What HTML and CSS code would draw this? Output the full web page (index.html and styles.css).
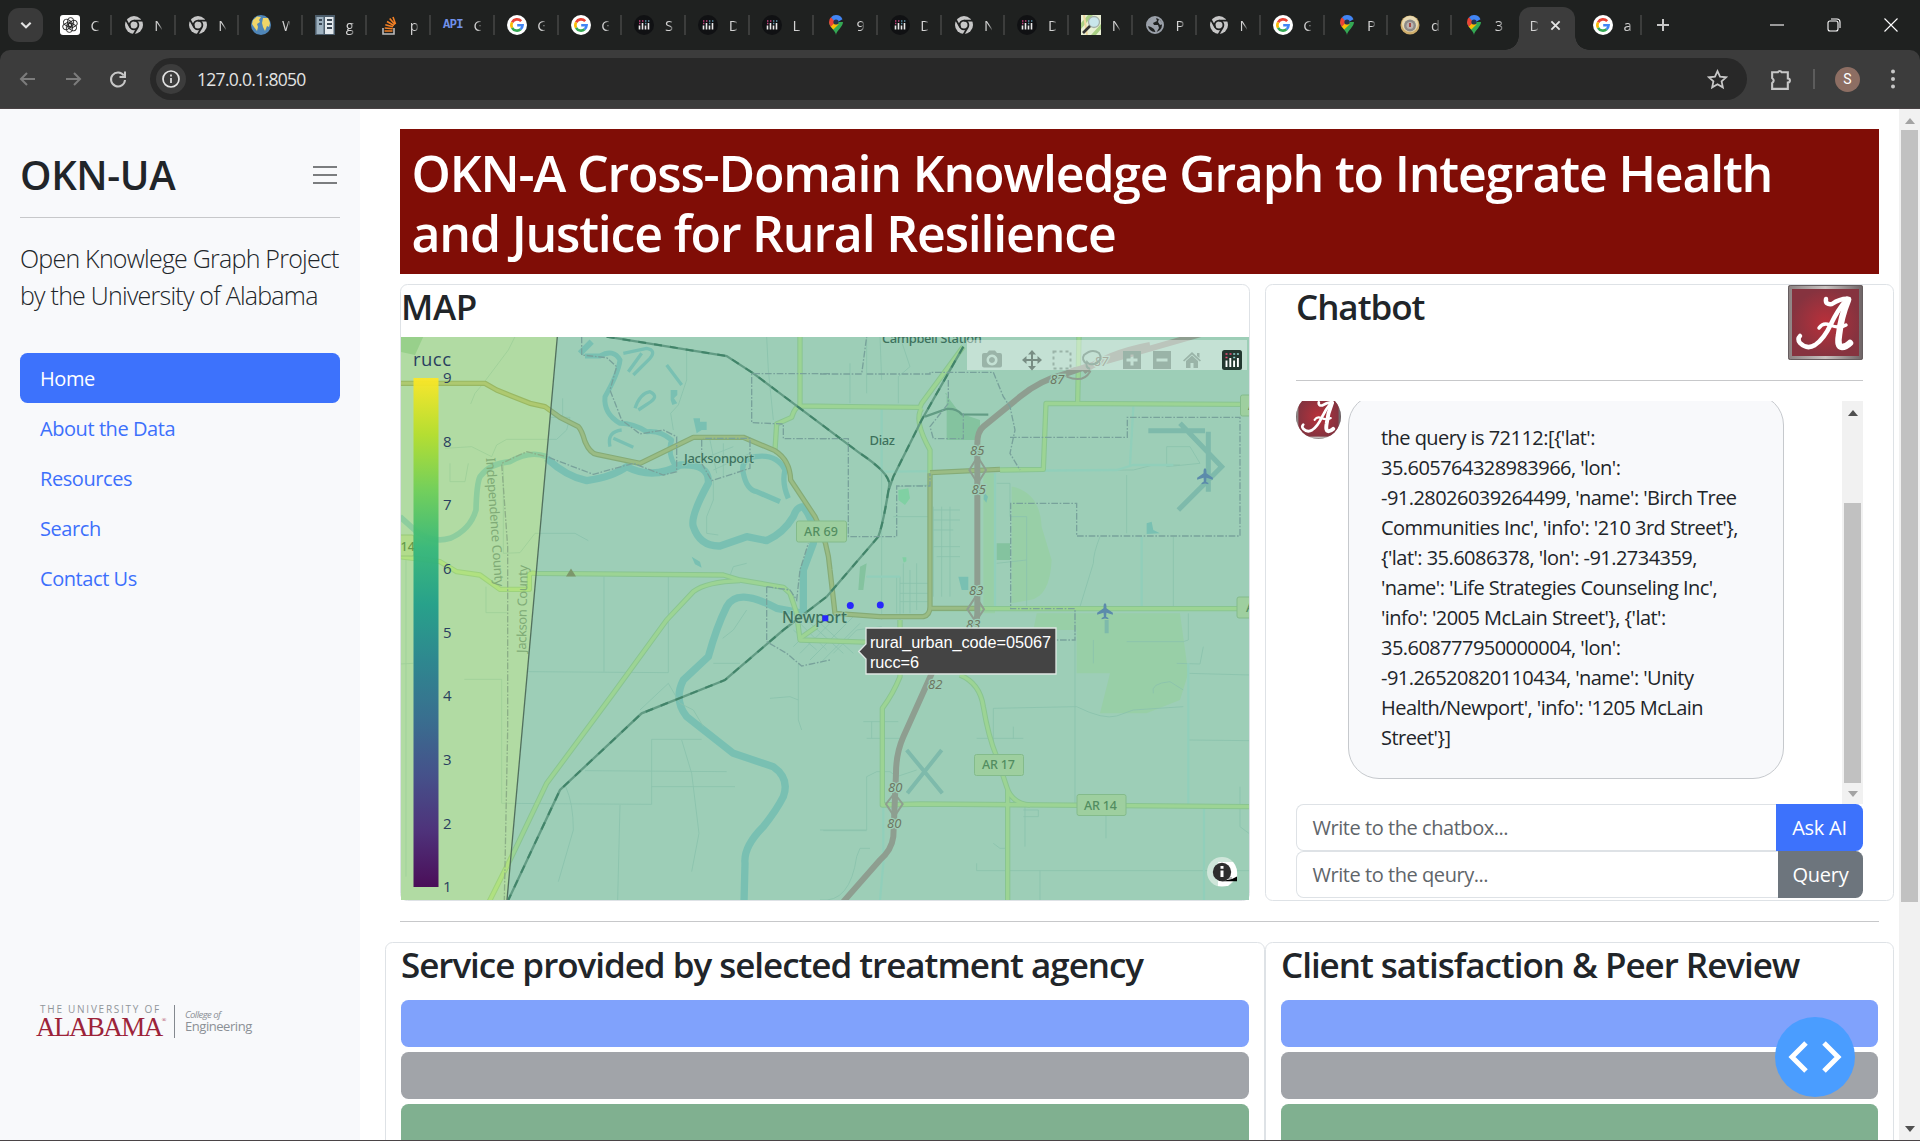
FILE: index.html
```html
<!DOCTYPE html>
<html lang="en">
<head>
<meta charset="utf-8">
<title>Dash</title>
<link rel="stylesheet" href="styles.css">
</head>
<body>
<svg class="sprite" aria-hidden="true">
  <defs>
    <radialGradient id="crimson"><stop offset="0" stop-color="#b9303a"/><stop offset="1" stop-color="#86333f"/></radialGradient>
    <linearGradient id="steel" x1="0" x2="1"><stop offset="0" stop-color="#8b8181"/><stop offset=".5" stop-color="#c9c2c0"/><stop offset="1" stop-color="#6d6264"/></linearGradient>
    <symbol id="i-openai" viewBox="0 0 20 20"><rect width="20" height="20" rx="3" fill="#fff"/><g fill="none" stroke="#222" stroke-width=".9"><rect x="7.600" y="2.600" width="6" height="9" rx="3" transform="rotate(0 10 10)"/><rect x="7.600" y="2.600" width="6" height="9" rx="3" transform="rotate(60 10 10)"/><rect x="7.600" y="2.600" width="6" height="9" rx="3" transform="rotate(120 10 10)"/><rect x="7.600" y="2.600" width="6" height="9" rx="3" transform="rotate(180 10 10)"/><rect x="7.600" y="2.600" width="6" height="9" rx="3" transform="rotate(240 10 10)"/><rect x="7.600" y="2.600" width="6" height="9" rx="3" transform="rotate(300 10 10)"/></g></symbol>
    <symbol id="i-chrome" viewBox="0 0 20 20"><circle cx="10" cy="10" r="9" fill="#c7c7c7"/><circle cx="10" cy="10" r="4.4" fill="#c7c7c7" stroke="#1f2020" stroke-width="1.8"/><path d="M10 5.6H18.4M6.2 12.2L2 4.9M13.8 12.2L9.6 19.4" stroke="#1f2020" stroke-width="1.8"/></symbol>
    <symbol id="i-earth" viewBox="0 0 20 20"><circle cx="10" cy="10" r="10" fill="#4f86b8"/><path d="M2 5L6 1.5L10 2L8 5L9 7L6 9L7 12L6 16L3 12L1 9ZM12 3L17 3L19 8L18 12L16 11L14 16L12 12L11 8Z" fill="#f0d668"/></symbol>
    <symbol id="i-panel" viewBox="0 0 20 20"><path d="M0 0h20v20H0z" fill="#4c5d6b"/><path d="M1.500 2h7v17h-7z" fill="#9db1bf"/><path d="M10 2h8.500v17H10z" fill="#e4eaee"/><path d="M4 4h3v2H4zM4 8h3v2H4zM12 4h5v2h-5zM12 8h5v2h-5zM12 12h5v2h-5z" fill="#3a4753"/></symbol>
    <symbol id="i-stack" viewBox="0 0 20 20"><path d="M4 13v6h11v-6" fill="none" stroke="#bcbbbb" stroke-width="1.600"/><path d="M5.500 16h8M5.700 13l8 .8M6.300 9.800l7.700 2M8 6.500l7 4M10.700 3.500l5.300 6M14 2l2.500 7" stroke="#f48024" stroke-width="1.600"/></symbol>
    <symbol id="i-google" viewBox="0 0 20 20"><circle cx="10" cy="10" r="10" fill="#fff"/><g fill="none" stroke-width="2.600"><path d="M14.200 6.200A5.600 5.600 0 0 0 5.100 7.300" stroke="#ea4335"/><path d="M5.100 7.300A5.600 5.600 0 0 0 5.100 12.800" stroke="#fbbc05"/><path d="M5.100 12.800A5.600 5.600 0 0 0 13.600 14.300" stroke="#34a853"/><path d="M13.600 14.300A5.600 5.600 0 0 0 15.600 10.300H10.200" stroke="#4285f4"/></g></symbol>
    <symbol id="i-plotly" viewBox="0 0 20 20"><circle cx="10" cy="10" r="10" fill="#101113"/><path d="M5.500 10.500v4M8.500 8v6.500M11.500 10.500v4M14.500 8v6.500" stroke="#e8e8e8" stroke-width="1.600"/><path d="M5 6h1.400M5 8.500h1.400M8 6h1.400" stroke="#c2417f" stroke-width="1.400"/><path d="M11 6h1.400M11 8.500h1.400M14 6h1.400" stroke="#5d95ad" stroke-width="1.400"/></symbol>
    <symbol id="i-pin" viewBox="0 0 20 20"><path d="M10 20C9.500 15.500 3 12 3 7H17C17 12 10.500 15.500 10 20Z" fill="#34a853"/><path d="M4.600 11.500L10 5l2.500 4.500L7.300 14.600Z" fill="#fbbc04"/><path d="M3 7Q3 4 5 2.300L10 6.500L4.700 11.700Q3 9.500 3 7" fill="#ea4335"/><path d="M5 2.300Q7 0 10 0Q14.800 0 16.500 4.300L10 8Z" fill="#4285f4"/><circle cx="10" cy="7" r="2.600" fill="#26344d"/></symbol>
    <symbol id="i-osm" viewBox="0 0 20 20"><path d="M0 0h20v20H0z" fill="#e9f0d4"/><path d="M0 8L7 0h5L0 14zM10 20L20 9v5l-5 6z" fill="#a9cf84"/><path d="M3 0l3 20" stroke="#efd9a0" stroke-width="2"/><circle cx="13" cy="7" r="5.500" fill="#c9e6ec" stroke="#a5b0a8" stroke-width="1.300"/><path d="M9 11l-7 7" stroke="#333" stroke-width="2.600"/></symbol>
    <symbol id="i-globe" viewBox="0 0 20 20"><circle cx="10" cy="10" r="8" fill="none" stroke="#9aa0a9" stroke-width="2"/><path d="M3 6L7 3H11L12 6L8 8L9 10H13L14 13L11 18L9 14L6 12L3 11ZM14 4l4 5-3 1-2-3z" fill="#9aa0a9"/></symbol>
    <symbol id="i-coin" viewBox="0 0 20 20"><circle cx="10" cy="10" r="9.500" fill="#cfae6c"/><circle cx="10" cy="9" r="8" fill="#e8dab4"/><circle cx="10" cy="10.500" r="6" fill="#8c8a88"/><circle cx="10" cy="10.500" r="3.500" fill="#bcb4b0"/><path d="M10 8v4" stroke="#a3332d" stroke-width="1.600"/></symbol>
    <symbol id="i-crest" viewBox="0 0 75 75"><rect width="75" height="75" rx="2" fill="url(#steel)"/><rect x=".5" y=".5" width="74" height="74" rx="2" fill="none" stroke="#665d5f"/><rect x="4" y="4" width="67" height="67" fill="url(#crimson)"/><g fill="none" stroke="#fff" stroke-linecap="round" stroke-linejoin="round"><path d="M38 14Q37 20 44 19Q53 13 61 14" stroke-width="4.500"/><path d="M59 14Q49 26 43 39Q36 54 27 60Q19 65 12 58Q9 54 12 51" stroke-width="4.500"/><path d="M60 15Q53 32 51 50Q49 62 54 62Q58 62 62 58" stroke-width="6.500"/><path d="M31 43Q35 37 42 40Q51 44 58 40" stroke-width="3.500"/></g></symbol>
    <symbol id="i-plane" viewBox="-8 -8 16 16"><path d="M0-7C1.300-7 1.300-5 1.300-2.500L7 1.500V3.300L1.300 1.600L1 5L3 6.300V7.300L0 6.600L-3 7.300V6.300L-1 5L-1.300 1.600L-7 3.300V1.500L-1.300-2.500C-1.300-5-1.300-7 0-7Z"/></symbol>
  </defs>
</svg>

<header class="tabs">
  <button class="tab-search"><svg viewBox="0 0 12 12"><path d="M2 4l4 4 4-4"/></svg></button>
  <div class="tab"><svg><use href="#i-openai"/></svg><span>C</span></div>
  <div class="tab"><svg><use href="#i-chrome"/></svg><span>N</span></div>
  <div class="tab"><svg><use href="#i-chrome"/></svg><span>N</span></div>
  <div class="tab"><svg><use href="#i-earth"/></svg><span>W</span></div>
  <div class="tab"><svg><use href="#i-panel"/></svg><span>g</span></div>
  <div class="tab"><svg><use href="#i-stack"/></svg><span>p</span></div>
  <div class="tab"><b class="api">API</b><span>G</span></div>
  <div class="tab"><svg><use href="#i-google"/></svg><span>G</span></div>
  <div class="tab"><svg><use href="#i-google"/></svg><span>G</span></div>
  <div class="tab"><svg><use href="#i-plotly"/></svg><span>S</span></div>
  <div class="tab"><svg><use href="#i-plotly"/></svg><span>D</span></div>
  <div class="tab"><svg><use href="#i-plotly"/></svg><span>L</span></div>
  <div class="tab"><svg><use href="#i-pin"/></svg><span>9</span></div>
  <div class="tab"><svg><use href="#i-plotly"/></svg><span>D</span></div>
  <div class="tab"><svg><use href="#i-chrome"/></svg><span>N</span></div>
  <div class="tab"><svg><use href="#i-plotly"/></svg><span>D</span></div>
  <div class="tab"><svg><use href="#i-osm"/></svg><span>N</span></div>
  <div class="tab"><svg><use href="#i-globe"/></svg><span>P</span></div>
  <div class="tab"><svg><use href="#i-chrome"/></svg><span>N</span></div>
  <div class="tab"><svg><use href="#i-google"/></svg><span>G</span></div>
  <div class="tab"><svg><use href="#i-pin"/></svg><span>P</span></div>
  <div class="tab"><svg><use href="#i-coin"/></svg><span>d</span></div>
  <div class="tab last"><svg><use href="#i-pin"/></svg><span>3</span></div>
  <div class="tab-active"><span>D</span><svg viewBox="0 0 12 12"><path d="M1.500 1.500l9 9M10.500 1.500l-9 9"/></svg></div>
  <div class="tab after"><svg><use href="#i-google"/></svg><span>a</span></div>
  <svg class="new-tab" viewBox="0 0 14 14"><path d="M7 1v12M1 7h12"/></svg>
  <div class="window-controls">
    <svg viewBox="0 0 14 14"><path d="M0 7h14"/></svg>
    <svg viewBox="0 0 14 14"><rect x="1" y="3" width="10" height="10" rx="2"/><path d="M4 1h6q3 0 3 3v6"/></svg>
    <svg viewBox="0 0 14 14"><path d="M.5.500l13 13M13.500.500l-13 13"/></svg>
  </div>
</header>

<div class="toolbar">
  <svg class="nav dim" viewBox="0 0 20 20"><path d="M17 10H3M9 4l-6 6 6 6"/></svg>
  <svg class="nav dim" viewBox="0 0 20 20"><path d="M3 10h14M11 4l6 6-6 6"/></svg>
  <svg class="nav" viewBox="0 0 20 20"><path d="M15.800 6.500A7 7 0 1 0 17 11"/><path d="M17 2.500V8h-5.500"/></svg>
  <div class="omnibox">
    <span class="site-info"><svg viewBox="0 0 20 20"><circle cx="10" cy="10" r="8"/><path d="M10 9v5M10 5.500v2"/></svg></span>
    <span class="url">127.0.0.1:8050</span>
    <svg class="star" viewBox="0 0 20 20"><path d="M10 2l2.400 5.300 5.800.6-4.300 3.900 1.200 5.700-5.100-2.900-5.100 2.900 1.200-5.700L1.800 7.900l5.800-.6z"/></svg>
  </div>
  <svg class="ext" viewBox="0 0 22 22"><path d="M3 4h5.500a2 2 0 0 1 3.600 0H18v6a2 2 0 0 1 0 4v6H3v-5.500q3-2.500 0-5z"/></svg>
  <i class="sep"></i>
  <span class="avatar">S</span>
  <svg class="more" viewBox="0 0 4 20"><circle cx="2" cy="2.500" r="2"/><circle cx="2" cy="10" r="2"/><circle cx="2" cy="17.500" r="2"/></svg>
</div>

<div class="page">
  <aside class="sidebar">
    <div class="brand"><h2>OKN-UA</h2><svg viewBox="0 0 24 18"><path d="M0 1h24M0 9h24M0 17h24"/></svg></div>
    <hr>
    <p class="lead">Open Knowlege Graph Project<br>by the University of Alabama</p>
    <nav>
      <a class="active">Home</a><a>About the Data</a><a>Resources</a><a>Search</a><a>Contact Us</a>
    </nav>
    <div class="ua-logo">
      <div class="ua-name"><small>THE UNIVERSITY OF</small><strong>ALABAMA<sup>®</sup></strong></div>
      <div class="ua-college"><em>College of</em><span>Engineering</span></div>
    </div>
  </aside>

  <main>
    <h1>OKN-A Cross-Domain Knowledge Graph to Integrate Health<br>and Justice for Rural Resilience</h1>

    <div class="row top">
      <section class="card map-card">
        <h3>MAP</h3>
        <div class="map">
        <svg viewBox="401 337 848 563">
          <defs>
            <linearGradient id="viridis" x1="0" y1="1" x2="0" y2="0"><stop offset="0" stop-color="#440154"/><stop offset=".111" stop-color="#482878"/><stop offset=".222" stop-color="#3e4989"/><stop offset=".333" stop-color="#31688e"/><stop offset=".444" stop-color="#26828e"/><stop offset=".556" stop-color="#1f9e89"/><stop offset=".667" stop-color="#35b779"/><stop offset=".778" stop-color="#6ece58"/><stop offset=".889" stop-color="#b5de2b"/><stop offset="1" stop-color="#fde725"/></linearGradient>
            <g id="secondary">
              <path d="M0 680L120 695L170 725L240 735L300 778H388V735Q390 728 405 730L970 735L1020 750L1150 772L1170 790L1190 850L1200 930L1420 937L1470 958"/>
              <path d="M1200 925L1250 890M1020 752Q920 755 880 785L800 870L640 1090L440 1360L330 1590L265 1720"/>
              <path d="M1200 20V228L1350 230L1560 232L1565 220L1690 50"/>
              <path d="M1200 228Q1185 230 1175 262L1130 282L1125 360"/>
              <path d="M1565 235Q1540 270 1590 360V430"/>
              <path d="M2037 20L2033 215M2540 223L1938 220L1930 418L1800 420"/>
              <path d="M1590 836H2540"/>
              <path d="M1500 870V1040Q1480 1090 1447 1135V1425L1560 1422L2550 1430"/>
              <path d="M1680 1035Q1740 1060 1750 1130Q1765 1220 1790 1280L1820 1370Q1835 1420 1890 1425M1823 1380V1720"/>
            </g>
            <g id="primary">
              <path d="M0 160H255L290 180L390 220L435 230L480 262L535 290Q545 300 555 335Q570 370 590 373L720 400L880 322H1030L1125 362Q1170 390 1172 450L1245 560Q1285 640 1290 720L1305 850L1440 860H1570Q1590 855 1590 830V430"/>
              <path d="M1590 428L1800 418M1590 835H1740"/>
            </g>
            <g id="motorway">
              <path d="M2410 10L2200 70L2060 110L2000 130Q1920 150 1860 200L1750 290Q1732 305 1732 340V850L1725 930Q1700 990 1600 1020L1510 1220Q1488 1270 1488 1330L1480 1520Q1475 1560 1440 1590L1330 1715"/>
              <path d="M2250 45Q2120 70 2050 125"/>
            </g>
            <g id="minor">
              <path d="M345 20L325 60L250 160L225 190L212 222M488 205V262M452 262H510L500 300L470 328H320L290 345L275 380L215 350L135 355M150 400V455H195L205 400M310 400V670L360 668L405 610H525L565 632M258 770V848H320M18 670V1640M0 1002L40 1000M193 1048H305V1420L755 1423V1228H905M385 1025L805 1028V740M612 740V1025M555 1322L980 1325M755 1370H1005M845 1230L875 1330L897 1510L875 1625M497 1370Q520 1420 520 1500L475 1655M660 1425L653 1710M805 1060L720 1140M805 1060L840 1120L880 1140L910 1190M1040 700L1000 710L985 750L970 738M860 60V150L835 225L812 250L820 300M1100 20L1105 120L1120 270M940 450V510L920 560V610L955 615M1110 1105L1170 1100L1195 1110V1170L1205 1200M1195 1110V1000M1270 1502H1400M940 1000H1020M1040 840L1000 900L968 925"/>
              <path d="M1445 230V425L2200 420L2260 405H2340M1445 425V870M2200 230L2190 405M1785 430V830M1400 740H1500V870M1370 900L1445 890M1480 560H1590M1600 530V800M1600 540H1680M1600 570H1680M1600 600H1660M1600 650H1680M1610 680H1680M1625 530V800M1650 530V800M1490 470L1590 465M1400 20V190M1500 20L1530 110L1495 140V220M1350 100V220M1790 460H1830V560H1880V830M1790 700L1880 690M2330 1000L2400 1002L2410 950M2180 935L2350 935L2365 930V850M2365 1030L2550 1035M2365 1230L2550 1232M2225 620V830M2320 620V830M2100 620Q2080 670 2080 700L2040 830M2180 435V610M2300 350L2370 350L2400 400L2300 410ZM1780 1250V1135L2030 1130Q2110 1170 2150 1158L2200 1140L2350 1130M2025 840V1420M1730 1225H1870M1840 1190V1225M1390 1175H1495M1400 1225H1500M1415 1175V1225M1260 1500H1400V1340L1430 1325H1470L1490 1340L1550 1320M1260 1710Q1350 1720 1370 1580L1380 1555H1410M1730 1600V1622H2550M1920 1622V1710M1875 1430V1550M1870 1440H1915V1460H1870M2118 1455V1525M2520 1370V1490L2560 1520M2260 1090Q2250 1060 2310 1055L2350 1080M1780 1540L1800 1555H1820M2080 930V1000M1440 20L1445 150"/>
            </g>
            <g id="streets">
              <path d="M1180 900L1250 960M1200 880L1280 960M1220 870L1330 970M1250 870L1360 970M1180 950L1280 850M1200 970L1320 850M1230 990L1360 860M1260 1000L1380 880M1300 970L1370 900M930 330L950 430M970 340V440M900 390L1000 350M940 420L1050 370M1490 740V850M1510 700V850M1530 720V850M1550 700V840M1500 760H1590M1500 790H1590M1500 815H1590"/>
            </g>
          </defs>
          <rect class="land" x="401" y="337" width="848" height="563"/>
          <g transform="translate(400 330) scale(.33333)">
            <path class="wood" d="M0 20H70L45 75L0 65Z"/>
            <path class="park" d="M1840 470Q1920 490 1925 590L1955 690Q1950 800 1890 810L1835 820V470ZM1750 430H1785V850H1750ZM1910 850H2340L2365 1030L2340 1110L2240 1150H2100L2130 1030H2030V900H1900Z"/>
            <path class="wood" d="M1600 190h40v140h100v-60l-60-20-45-60zM1790 640h40v50h-40zM1380 710l20-10-10 80-15 0z"/>
            <path class="lawn" d="M1495 480l30-5 5 30-15 20-20-15zM1507 682l12 0 0 12-8 4z"/>
            <g class="water">
              <path d="M0 560L50 605Q100 640 150 625Q210 600 228 540Q230 460 240 440Q270 400 330 395Q390 360 440 380" stroke-width="17"/>
              <path d="M830 415Q800 370 815 330Q780 300 740 305Q700 280 660 280Q610 250 615 200Q655 130 660 90Q640 55 600 78H555" stroke-width="15"/>
              <path d="M440 385Q500 440 560 452Q640 440 680 410Q760 450 840 405Q930 400 925 460Q870 560 880 590Q900 650 960 648L1040 620L1100 632Q1150 610 1180 560Q1190 530 1210 530Q1250 580 1240 640L1210 720V850L1130 835Q1010 770 980 830Q950 890 925 980L850 1050Q820 1110 860 1160L1000 1270L1120 1310Q1170 1345 1150 1400Q1130 1440 1090 1490Q1030 1550 1035 1600L1032 1720" stroke-width="22"/>
              <path d="M1065 380Q1130 370 1155 420Q1145 460 1165 505M1065 380Q1020 390 1030 430Q1040 480 1070 485L1140 515" stroke-width="16"/>
              <path d="M670 70L740 55Q770 60 750 85L700 135M725 70L685 125M800 105L845 165M630 350Q620 305 665 300M640 325L700 352M705 235Q720 190 750 185Q780 200 745 220L715 240" stroke-width="10"/>
              <path d="M575 35L540 70" stroke-width="18"/>
            </g>
            <path class="lake" d="M880 265h20v10h20v25h-15l-15 10zM875 680l25 15 5 18-20-10zM812 180h20v15l-10 10 10 15-15 5-5-15zM1675 740h30v40h-20zM1752 485l12 15-5 18-8-10zM2240 580l15-5 5 25 20 10-40 2z"/>
            <g class="runway"><path d="M2245 302H2415M2340 280L2465 410L2335 540M2425 305V485" stroke-width="15"/><path d="M1520 1260L1627 1390M1625 1260L1522 1390M2120 870V910" stroke-width="12"/></g>
            <use href="#minor" class="minor"/><use href="#streets" class="minor"/>
            <g class="white-road"><path d="M1445 230V425L2150 420L2200 405H2320M2200 230L2190 405M1785 430V830M2365 1000V1425M2412 1430V1720M1450 1430V1600L1440 1710M2225 620V830M1400 740H1500"/></g>
            <use href="#secondary" class="secondary-case"/><use href="#secondary" class="secondary"/>
            <use href="#primary" class="primary-case"/><use href="#primary" class="primary"/>
            <g class="rail"><path d="M620 20L980 78L1060 130L1380 370Q1470 430 1468 465Q1450 580 1435 620L1280 800L1150 900L975 1050L725 1150L480 1380L325 1710M1690 50L1565 270L1480 440L1466 480M1575 260L1640 237Q1670 235 1685 253L1765 254"/></g>
            <g class="rail-dash"><path d="M620 20L980 78L1060 130L1380 370Q1470 430 1468 465Q1450 580 1435 620L1280 800L1150 900L975 1050L725 1150L480 1380L325 1710M1690 50L1565 270L1480 440L1466 480"/></g>
            <use href="#motorway" class="motorway"/>
            <g class="ramps"><path d="M1733 380L1758 420L1733 460L1708 420ZM1727 800L1752 838L1727 875L1702 838ZM1483 1390L1508 1422L1483 1460L1458 1422ZM1995 130Q2030 100 2070 125Q2050 160 2000 140"/></g>
            <g class="border">
              <path d="M545 20V75L620 83L650 110L630 180L665 270L720 312L790 300L830 320V425L790 435L700 400L580 433L440 380L380 365L305 400L323 650V1200L313 1710M905 330V400L935 452L1050 415V325H910M1290 131H1055V278L1150 282V326H1290M1100 770L1170 780L1190 810L1200 720L1225 640M1100 770V935L1160 970L1205 1008L1290 990"/>
              <path d="M1260 132H1385L1400 20M1400 132H1590V127H1780L1810 200L1830 230L1845 300L1830 370L1860 420M1645 150V220L1590 290L1600 326H1690V250M1830 322H2182V262H2520V618H2030V520H1832V836H2025V930H1960M1260 326H1345V620H1490V468H1590V430"/>
            </g>
          </g>
          <g class="plane"><use href="#i-plane" x="1196" y="467" width="18" height="18"/><use href="#i-plane" x="1096" y="602" width="18" height="18"/></g>
          <path class="peak" d="M571 568.500l5 8h-10z"/>
          <g class="shield"><rect x="796.500" y="521" width="50" height="21" rx="2"/><rect x="974.500" y="754.500" width="49" height="21" rx="2"/><rect x="1077" y="794.500" width="49" height="21" rx="2"/><rect x="1240.500" y="395" width="40" height="21" rx="2"/><rect x="1237" y="597" width="40" height="21" rx="2"/><rect x="380" y="535" width="34" height="21" rx="2"/></g>
          <g class="shield-text"><text x="804" y="536" textLength="34">AR 69</text><text x="982" y="769" textLength="33">AR 17</text><text x="1084" y="810" textLength="33">AR 14</text><text x="1248" y="410">A</text><text x="1246" y="612">A</text><text x="400.500" y="551">14</text></g>
          <g class="place"><text x="684" y="463" textLength="70" font-size="13">Jacksonport</text><text x="869.500" y="445" textLength="25.500" font-size="13">Diaz</text><text x="782" y="622.500" textLength="65" font-size="15.500">Newport</text><text x="882" y="342.500" textLength="100" font-size="13">Campbell Station</text></g>
          <g class="exit"><text x="1050" y="384">87</text><text x="1094" y="366">87</text><text x="970" y="455">85</text><text x="971.500" y="493.500">85</text><text x="969" y="594.500">83</text><text x="966" y="628.500">83</text><text x="928" y="689">82</text><text x="888" y="792">80</text><text x="887" y="828">80</text></g>
          <g class="county"><text transform="translate(486 458) rotate(86)" textLength="129">Independence County</text><text transform="translate(526 653) rotate(-89)" textLength="88">Jackson County</text></g>
          <path d="M401 337H557.300L507 900H401Z" fill="#70c75d" opacity=".5"/>
          <path d="M557.300 337H1249V900H507Z" fill="#48ad85" opacity=".5"/>
          <path d="M557.300 337L507 900" stroke="#51705d" stroke-width="1.300"/>
          <g fill="#2727fb"><rect x="822.300" y="615.300" width="6" height="6" rx="1"/><circle cx="850.300" cy="605.600" r="3.500"/><circle cx="880.300" cy="605" r="3.500"/></g>
          <rect x="413.500" y="378" width="25" height="509" fill="url(#viridis)" opacity=".94"/>
          <g class="scale"><text x="413" y="366" font-size="18.500" textLength="38">rucc</text><text x="443" y="383">9</text><text x="443" y="447">8</text><text x="443" y="510">7</text><text x="443" y="574">6</text><text x="443" y="638">5</text><text x="443" y="701">4</text><text x="443" y="765">3</text><text x="443" y="829">2</text><text x="443" y="892">1</text></g>
          <rect x="967" y="340" width="280" height="30" fill="#fff" opacity=".4"/>
          <g class="modebar">
            <path d="M982 355q0-2 2-2h3l2-2.500h6l2 2.500h3q2 0 2 2v10.500q0 2-2 2h-16q-2 0-2-2zm10-.5a5.500 5.500 0 1 0 .1 0zm0 2.500a3 3 0 1 1-.1 0z" fill-rule="evenodd"/>
            <path class="on" d="M1032 350l4 4.500h-3v4.500h4.500v-3l4.500 4-4.500 4v-3h-4.500v5h3l-4 4.500-4-4.500h3v-5h-4.500v3l-4.500-4 4.500-4v3h4.500v-4.500h-3z"/>
            <path d="M1053.500 351.500h17v17h-17z" fill="none" stroke="#9ab4a8" stroke-width="2" stroke-dasharray="3 3"/>
            <path d="M1087 364Q1081 360 1084 355Q1092 348 1099 353Q1103 359 1097 363Q1090 366 1087 362Q1085 367 1090 369" fill="none" stroke="#9ab4a8" stroke-width="2"/>
            <path d="M1123 351h18v18h-18zm7.500 3.500v4h-4v3h4v4h3v-4h4v-3h-4v-4z" fill-rule="evenodd"/>
            <path d="M1153 351h18v18h-18zm3.500 7.500v3h11v-3z" fill-rule="evenodd"/>
            <path d="M1192 352l9 8.500-1.200 1-7.800-7-7.800 7-1.200-1zM1186 361l6-5.500 6 5.500v7h-4.500v-5h-3v5h-4.500zM1197 353h2.500v5l-2.500-2z"/>
          </g>
          <rect x="1222" y="350" width="20" height="20" rx="2.500" fill="#22362f"/>
          <path d="M1226.500 360.500v6.500M1230.300 358v9M1234.100 360.500v6.500M1237.900 358v9" stroke="#fff" stroke-width="1.900"/><path d="M1225.500 354h2M1225.500 357.500h2M1229.500 354h2" stroke="#ef4f7b" stroke-width="1.600"/><path d="M1233.200 354h2M1236.900 354h2M1233.200 357.500h2" stroke="#8fd2cf" stroke-width="1.600"/>
          <path d="M858.700 651.500L866 644V628H1056V674H866V659Z" fill="#444" stroke="#dfe8e3" stroke-width="1.300"/>
          <g class="tip"><text x="870" y="647.500" textLength="181">rural_urban_code=05067</text><text x="870" y="668" textLength="49">rucc=6</text></g>
          <circle cx="1222" cy="872" r="15" fill="#cfe6da"/><path d="M1218 862H1233Q1238 868 1237 877L1228 886H1218Z" fill="#fff"/><path d="M1221 881.300H1237V876.500L1232 879Z" fill="#000"/><path d="M1220 878h12" stroke="#777"/><circle cx="1222" cy="872" r="9.200" fill="#2e2e2e"/><path d="M1222 866v2.800M1222 870.500v6.500" stroke="#fff" stroke-width="3"/>
        </svg>
        </div>
      </section>

      <section class="card chat-card">
        <div class="chat-head"><h3>Chatbot</h3><svg viewBox="0 0 75 75"><use href="#i-crest"/></svg></div>
        <hr>
        <div class="chat-log">
          <div class="message">
            <svg viewBox="0 0 75 75"><use href="#i-crest"/></svg>
            <p>the query is 72112:[{'lat':<br>35.605764328983966, 'lon':<br>-91.28026039264499, 'name': 'Birch Tree<br>Communities Inc', 'info': '210 3rd Street'},<br>{'lat': 35.6086378, 'lon': -91.2734359,<br>'name': 'Life Strategies Counseling Inc',<br>'info': '2005 McLain Street'}, {'lat':<br>35.608777950000004, 'lon':<br>-91.26520820110434, 'name': 'Unity<br>Health/Newport', 'info': '1205 McLain<br>Street'}]</p>
          </div>
          <div class="scrollbar inner"><i class="up"></i><b></b><i class="down"></i></div>
        </div>
        <div class="field"><span class="input">Write to the chatbox...</span><button class="ask">Ask AI</button></div>
        <div class="field"><span class="input">Write to the qeury...</span><button class="query">Query</button></div>
      </section>
    </div>

    <hr class="divider">

    <div class="row bottom">
      <section class="card services"><h3>Service provided by selected treatment agency</h3><div class="bar blue"></div><div class="bar gray"></div><div class="bar green"></div></section>
      <section class="card reviews"><h3>Client satisfaction &amp; Peer Review</h3><div class="bar blue"></div><div class="bar gray"></div><div class="bar green"></div></section>
    </div>
  </main>

  <div class="scrollbar outer"><i class="up"></i><b></b><i class="down"></i></div>
  <button class="fab"><svg viewBox="0 0 80 80"><path d="M31 26L17 40L31 54M49 26L63 40L49 54"/></svg></button>
</div>
</body>
</html>
```
FILE: styles.css
```css
* { box-sizing: border-box; }
body { margin: 0; width: 1920px; height: 1141px; overflow: hidden; display: flex; flex-direction: column; font: 20px/30px "Open Sans", "Noto Sans", sans-serif; color: #212529; background: #fff; }
h1, h2, h3, p { margin: 0; }
button { border: 0; padding: 0; font: inherit; }
hr { margin: 0; border: 0; height: 1px; background: #c7c8ca; }
.sprite { position: absolute; width: 0; height: 0; }

/* browser chrome */
.tabs { height: 50px; flex: none; display: flex; align-items: center; background: #1f2120; padding-left: 8px; }
.tab-search { width: 35px; height: 34px; border-radius: 11px; background: #3a3a3a; display: grid; place-items: center; margin-right: 5px; }
.tab-search svg { width: 14px; height: 14px; fill: none; stroke: #e3e3e3; stroke-width: 1.8; }
.tab { flex: 0 0 63.84px; height: 20px; display: flex; align-items: center; padding-left: 12px; border-right: 2px solid #3c3d3c; }
.tab.last { border-color: transparent; }
.tab svg { width: 20px; height: 20px; flex: none; }
.tab span, .tab-active span { width: 8px; margin-left: 10.5px; overflow: hidden; font-size: 15px; line-height: 20px; color: #d2d2d2; -webkit-mask-image: linear-gradient(90deg, #000 60%, transparent 110%); mask-image: linear-gradient(90deg, #000 60%, transparent 110%); }
.api { width: 20px; font: bold 12px/20px "Liberation Mono", monospace; letter-spacing: -.5px; color: #7191ea; }
.tab-active { position: relative; flex: 0 0 56px; height: 43px; margin: 7px 3px 0; padding-bottom: 7px; background: #3c3c3c; border-radius: 12px 12px 0 0; display: flex; align-items: center; }
.tab-active::before, .tab-active::after { content: ""; position: absolute; bottom: 0; width: 14px; height: 14px; }
.tab-active::before { left: -14px; background: radial-gradient(circle at 0 0, transparent 13.500px, #3c3c3c 14px); }
.tab-active::after { right: -14px; background: radial-gradient(circle at 100% 0, transparent 13.500px, #3c3c3c 14px); }
.tab-active svg { width: 11px; height: 11px; margin-left: 12px; stroke: #e3e3e3; stroke-width: 2; }
.tab.after { padding-left: 15px; }
.new-tab { width: 14px; height: 14px; margin-left: 14px; stroke: #c7c7c7; stroke-width: 2; }
.window-controls { margin-left: auto; display: flex; gap: 43px; padding-right: 22px; }
.window-controls svg { width: 14px; height: 14px; fill: none; stroke: #fff; stroke-width: 1.1; }
.toolbar { height: 59px; flex: none; display: flex; align-items: center; background: #3c3c3c; border-top-right-radius: 10px; border-top-left-radius: 10px; border-bottom: 1px solid #494244; box-shadow: 0 -12px #1f2120; padding-left: 18px; }
.tabs { position: relative; }
.nav { width: 20px; height: 20px; margin-right: 25px; fill: none; stroke: #c7c7c7; stroke-width: 2; }
.nav.dim { stroke: #7c7c7c; }
.omnibox { width: 1597px; height: 42px; border-radius: 21px; background: #282828; display: flex; align-items: center; padding: 0 19px 0 6px; margin-left: -3px; }
.site-info { width: 30px; height: 30px; border-radius: 50%; background: #3c3c3c; display: grid; place-items: center; }
.site-info svg { width: 20px; height: 20px; fill: none; stroke: #e3e3e3; stroke-width: 1.700; }
.url { margin-left: 11px; font-size: 17.5px; letter-spacing: -.7px; color: #e3e3e3; }
.star { width: 21px; height: 21px; margin-left: auto; fill: none; stroke: #c7c7c7; stroke-width: 1.700; }
.ext { width: 23px; height: 23px; margin-left: 22px; fill: none; stroke: #c7c7c7; stroke-width: 2; }
.sep { width: 2px; height: 20px; background: #5c5c5c; margin-left: 21px; }
.avatar { width: 25px; height: 25px; border-radius: 50%; background: #8d6e63; color: #fff; font: 14px/25px Roboto, sans-serif; text-align: center; margin-left: 20px; }
.more { width: 4px; height: 20px; margin-left: 31px; fill: #c7c7c7; }

/* app */
.page { flex: 1; min-height: 0; display: flex; border-bottom: 1px solid #4a4446; position: relative; overflow: hidden; }
.sidebar { width: 360px; background: #f8f9fb; padding: 40px 20px 0; display: flex; flex-direction: column; }
.brand { display: flex; justify-content: space-between; align-items: center; padding: 0 3px 2px 0; height: 53px; }
.brand h2 { font-size: 40px; line-height: 48px; font-weight: 600; letter-spacing: -.35px; }
.brand svg { width: 24px; height: 18px; fill: none; stroke: #7b7d7f; stroke-width: 2; }
.sidebar hr { margin-top: 15px; }
.lead { margin-top: 21.5px; font-size: 25px; line-height: 37.5px; font-weight: 300; letter-spacing: -.77px; white-space: nowrap; height: 113.5px; }
nav { display: flex; flex-direction: column; }
nav a { height: 50px; line-height: 50px; padding: 1px 0 0 20px; border-radius: 7.5px; color: #3d70fb; letter-spacing: -.43px; }
nav a.active { background: #3d72fc; color: #fff; }
.ua-logo { margin: auto 0 102px 16px; display: flex; align-items: stretch; white-space: nowrap; }
.ua-name { width: 139px; border-right: 1.500px solid #84898f; height: 33px; }
.ua-name small { display: block; font: 10px/9px "Open Sans", sans-serif; letter-spacing: 1.75px; color: #90959a; padding-left: 4px; }
.ua-name strong { display: block; font: 27px/27px "Liberation Serif", serif; color: #9c2339; letter-spacing: -1.55px; }
.ua-name sup { font-size: 6px; vertical-align: 14px; line-height: 0; }
.ua-college { padding: 4px 0 0 10px; display: flex; flex-direction: column; color: #8b9096; }
.ua-college em { font-size: 9.5px; line-height: 11px; letter-spacing: -.55px; }
.ua-college span { font-size: 13px; line-height: 13px; letter-spacing: -.45px; }

main { width: 1539px; padding: 20px 5px 0 25px; }
h1 { margin: 0 15px; padding: 13.5px 11.5px 11.5px; height: 145px; background: #800d06; color: #fff; font-size: 50px; line-height: 60px; font-weight: 600; letter-spacing: -1.18px; white-space: nowrap; }
h3 { font-size: 35px; line-height: 42px; font-weight: 600; letter-spacing: -1.03px; white-space: nowrap; padding-top: 1px; height: 42px; }
.row { display: flex; }
.card { border: 1px solid #dee2e6; border-radius: 7.5px; }
.top { margin: 10px 0 0 15px; gap: 15px; height: 617px; }
.map-card { width: 850px; }
.map-card h3 { letter-spacing: -.3px; }
.map { margin-top: 10px; height: 563px; }
.map svg { display: block; width: 848px; height: 563px; }
.chat-card { width: 629px; padding: 0 30px; }
.chat-head { display: flex; justify-content: space-between; height: 95px; }
.chat-head svg { width: 75px; height: 75px; }
.chat-log { margin-top: 20px; height: 403px; overflow: hidden; display: flex; justify-content: space-between; }
.message { display: flex; gap: 7px; margin-top: -7px; align-items: flex-start; }
.message svg { width: 45px; height: 45px; border-radius: 50%; }
.message p { width: 436px; height: 385px; padding: 27.5px 0 0 32px; border: 1px solid #c6c9cd; border-radius: 31px; background: #f8f9fb; white-space: nowrap; letter-spacing: -.54px; }
.scrollbar { width: 21px; background: #f1f1f1; display: flex; flex-direction: column; align-items: center; }
.scrollbar b { width: 17px; background: #c1c1c1; }
.up, .down { border: 5px solid transparent; }
.up { border-top: 0; border-bottom: 6px solid #505050; }
.down { border-bottom: 0; border-top: 6px solid #505050; }
.inner .up { margin: 9px 0 87px; }
.inner b { height: 280px; }
.inner .down { margin-top: 8px; border-top-color: #a3a3a3; }
.outer .up { margin: 9px 0 6px; border-bottom-color: #a3a3a3; }
.outer b { height: 772px; }
.outer .down { margin: auto 0 8px; }
.field { display: flex; height: 47px; line-height: 46px; letter-spacing: -.45px; }
.input { flex: 1; border: 1px solid #dee2e6; border-right: 0; border-radius: 7.5px 0 0 7.5px; padding-left: 15.5px; color: #5f656a; }
.field button { border-radius: 0 7.5px 7.5px 0; color: #fff; text-align: center; letter-spacing: -.25px; padding-top: 1px; }
.ask { width: 87px; background: #3d72fc; }
.query { width: 85px; background: #6d757d; }
.divider { margin: 20px 15px; }
.bottom { height: 198px; }
.bottom .card { padding: 0 15px; height: 300px; }
.bottom h3 { margin-bottom: 15px; }
.services { width: 880px; }
.reviews { width: 629px; }
.bar { height: 47px; border-radius: 7.5px; margin-bottom: 5px; }
.blue { background: #80a2fc; }
.gray { background: #a1a4a9; }
.green { background: #80b090; }
.fab { position: absolute; left: 1775px; top: 908px; width: 80px; height: 80px; border-radius: 50%; background: #4a9dff; }
.fab svg { width: 80px; height: 80px; fill: none; stroke: #fff; stroke-width: 5; }

/* map layers */
.map text { font-family: "Noto Sans", "Open Sans", sans-serif; }
.land { fill: #f2efe9; }
.wood { fill: #c0d8b8; }
.park { fill: #e9f0c9; }
.lawn { fill: #b9f3c0; }
.water { fill: none; stroke: #aad3df; stroke-linejoin: round; }
.lake { fill: #aad3df; }
.runway { fill: none; stroke: #b4c6d0; }
.minor { fill: none; stroke: #ccd6d2; stroke-width: 2.500; }
.white-road { fill: none; stroke: #dbf0ef; stroke-width: 7; }
.secondary-case { fill: none; stroke: #cbdc9c; stroke-width: 16; stroke-linejoin: round; }
.secondary { fill: none; stroke: #f1faa2; stroke-width: 10; stroke-linejoin: round; }
.primary-case { fill: none; stroke: #c2a868; stroke-width: 16; stroke-linejoin: round; }
.primary { fill: none; stroke: #ecca83; stroke-width: 9; stroke-linejoin: round; }
.motorway { fill: none; stroke: #d48f9b; stroke-width: 18; stroke-linejoin: round; }
.ramps { fill: none; stroke: #d48f9b; stroke-width: 6; }
.rail { fill: none; stroke: #7d8a83; stroke-width: 7; }
.rail-dash { fill: none; stroke: #3a5a4c; stroke-width: 6; stroke-dasharray: 24 24; }
.border { fill: none; stroke: #a996b0; stroke-width: 4; stroke-dasharray: 20 5 5 5; }
.plane { fill: #7069d0; }
.peak { fill: #b08050; }
.shield rect { fill: #f4f0b8; stroke: #c0c890; }
.shield-text { font-size: 12.500px; fill: #5d6c3a; font-weight: 500; }
.place { fill: #333; stroke: #f2efe9; stroke-width: 2; paint-order: stroke; stroke-opacity: .6; font-weight: 500; }
.exit { font-size: 13px; font-style: italic; fill: #95413e; stroke: #f2efe9; stroke-width: 2.500; paint-order: stroke; }
.county { font-size: 13px; fill: #8f8d8f; }
.map .scale text { fill: #2a3f5f; font-family: "Open Sans", sans-serif; }
.scale { font-size: 15px; }
.modebar { fill: #9ab4a8; }
.modebar .on { fill: #788d83; }
.map .tip text { font-family: "Liberation Sans", sans-serif; font-size: 16.25px; fill: #fff; }
```
